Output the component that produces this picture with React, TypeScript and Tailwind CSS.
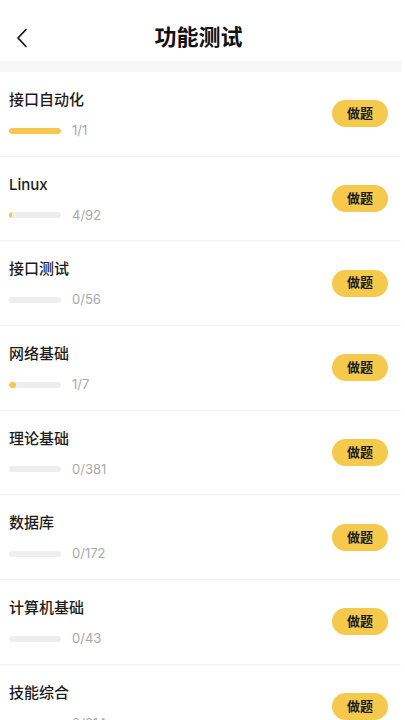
const topics = [
  { name: "接口自动化", done: 1, total: 1 },
  { name: "Linux", done: 4, total: 92 },
  { name: "接口测试", done: 0, total: 56 },
  { name: "网络基础", done: 1, total: 7 },
  { name: "理论基础", done: 0, total: 381 },
  { name: "数据库", done: 0, total: 172 },
  { name: "计算机基础", done: 0, total: 43 },
  { name: "技能综合", done: 0, total: 214 },
];

function TopicRow({ name, done, total }: { name: string; done: number; total: number }) {
  const pct = total ? Math.max(done / total, done > 0 ? 0.05 : 0) : 0;
  return (
    <div className="flex h-[84.7px] shrink-0 items-center justify-between border-b border-[#f2f2f2] pl-[9px] pr-[13px]">
      <div className="flex flex-col self-start pt-[17px]">
        <span className="text-[15px] font-medium leading-[21px] text-[#1c1c1c]">
          {name}
        </span>
        <div className="mt-[12px] flex items-center">
          <div className="h-[6px] w-[52px] overflow-hidden rounded-full bg-[#eeeeee]">
            <div
              className="h-full rounded-full bg-[#f5c94b]"
              style={{ width: `${pct * 100}%` }}
            />
          </div>
          <span className="ml-[11px] text-[13px] leading-[17px] text-[#a9a9a9]">
            {done}/{total}
          </span>
        </div>
      </div>
      <button className="flex h-[27px] w-[56px] items-center justify-center rounded-full bg-[#f5c94b] text-[13px] font-semibold text-[#1a1a1a]">
        做题
      </button>
    </div>
  );
}

export default function App() {
  return (
    <div className="h-[720px] overflow-hidden bg-white">
      <div
        className="flex h-full w-[401px] flex-col"
        style={{ fontFamily: 'Inter, "Noto Sans CJK SC", sans-serif' }}
      >
        <header className="relative flex h-[61px] shrink-0 items-center justify-center pt-[13px] pr-[4px]">
          <button className="absolute left-[12px] top-[24px] p-1">
            <svg width="12" height="20" viewBox="0 0 12 20" fill="none">
              <path d="M10 1.5 L2 10 L10 18.5" stroke="#111" strokeWidth="1.7" strokeLinecap="round" strokeLinejoin="round" />
            </svg>
          </button>
          <h1 className="text-[22px] font-bold leading-none text-[#111]">功能测试</h1>
        </header>
        <div className="h-[11px] shrink-0 bg-[#f6f6f6]" />
        <div className="flex flex-col">
          {topics.map((t) => (
            <TopicRow key={t.name} {...t} />
          ))}
        </div>
      </div>
    </div>
  );
}
